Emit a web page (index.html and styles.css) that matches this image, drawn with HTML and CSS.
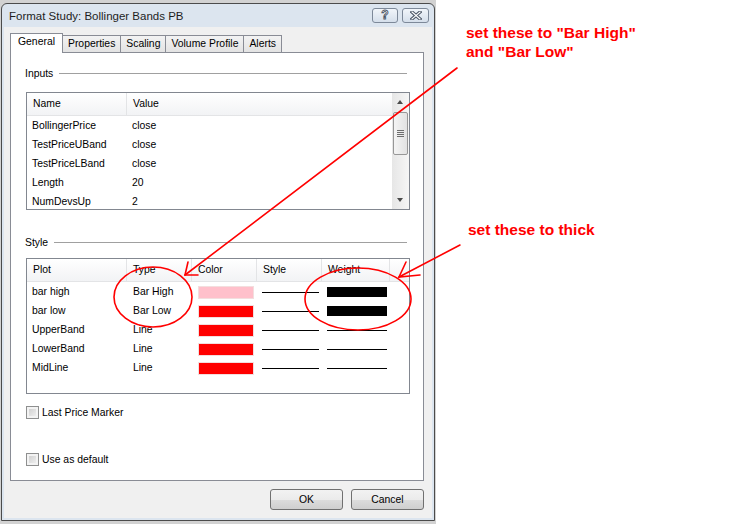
FILE: index.html
```html
<!DOCTYPE html>
<html lang="en">
<head>
<meta charset="UTF-8" />
<title>Format Study: Bollinger Bands PB</title>
<link rel="stylesheet" href="styles.css">
</head>
<body>

<div class="page">
  <div class="desk">
  <div class="window">
    <div class="titlebar">
      <span class="title">Format Study: Bollinger Bands PB</span>
      <div class="caption-btns">
        <span class="cbtn help">?</span>
        <span class="cbtn close">
          <svg width="12" height="9" viewBox="0 0 12 9">
            <path d="M2 1 L10 8 M10 1 L2 8" stroke="#4b5666" stroke-width="3.2" stroke-linecap="square" fill="none"/>
            <path d="M2 1 L10 8 M10 1 L2 8" stroke="#fff" stroke-width="1.2" stroke-linecap="square" fill="none"/>
          </svg>
        </span>
      </div>
    </div>

    <div class="client">
      <div class="tabs">
        <div class="tab active">General</div>
        <div class="tab">Properties</div>
        <div class="tab">Scaling</div>
        <div class="tab">Volume Profile</div>
        <div class="tab">Alerts</div>
      </div>

      <div class="panel">
        <div class="group">Inputs</div>
        <div class="listbox inputs">
          <div class="list-body">
            <div class="head cols-inputs"><span>Name</span><span>Value</span></div>
            <div class="row cols-inputs"><span>BollingerPrice</span><span>close</span></div>
            <div class="row cols-inputs"><span>TestPriceUBand</span><span>close</span></div>
            <div class="row cols-inputs"><span>TestPriceLBand</span><span>close</span></div>
            <div class="row cols-inputs"><span>Length</span><span>20</span></div>
            <div class="row cols-inputs"><span>NumDevsUp</span><span>2</span></div>
          </div>
          <div class="scroll">
            <div class="arrow up"></div>
            <div class="thumb"><i></i><i></i><i></i><i></i></div>
            <div class="track"></div>
            <div class="arrow down"></div>
          </div>
        </div>

        <div class="group style-group">Style</div>
        <div class="listbox style-list">
          <div class="list-body">
            <div class="head cols-style"><span>Plot</span><span>Type</span><span>Color</span><span>Style</span><span>Weight</span><span></span></div>
            <div class="row cols-style">
              <span>bar high</span><span>Bar High</span>
              <span><b class="swatch pink"></b></span>
              <span><b class="line"></b></span>
              <span><b class="weight thick"></b></span>
            </div>
            <div class="row cols-style">
              <span>bar low</span><span>Bar Low</span>
              <span><b class="swatch red"></b></span>
              <span><b class="line"></b></span>
              <span><b class="weight thick"></b></span>
            </div>
            <div class="row cols-style">
              <span>UpperBand</span><span>Line</span>
              <span><b class="swatch red"></b></span>
              <span><b class="line"></b></span>
              <span><b class="weight thin"></b></span>
            </div>
            <div class="row cols-style">
              <span>LowerBand</span><span>Line</span>
              <span><b class="swatch red"></b></span>
              <span><b class="line"></b></span>
              <span><b class="weight thin"></b></span>
            </div>
            <div class="row cols-style">
              <span>MidLine</span><span>Line</span>
              <span><b class="swatch red"></b></span>
              <span><b class="line"></b></span>
              <span><b class="weight thin"></b></span>
            </div>
          </div>
        </div>

        <label class="check first"><span class="box"></span>Last Price Marker</label>
        <label class="check second"><span class="box"></span>Use as default</label>
      </div>

      <div class="actions">
        <button>OK</button>
        <button>Cancel</button>
      </div>
    </div>
  </div>
  </div>

  <div class="notes">
    <p class="note">set these to "Bar High"<br>and "Bar Low"</p>
    <p class="note thick-note">set these to thick</p>
  </div>
</div>

<!-- red pen marks drawn over the screenshot -->
<svg class="marks" width="748" height="524" viewBox="0 0 748 524">
  <g stroke="#f00" stroke-width="1.6" fill="none" stroke-linecap="round">
    <line x1="457" y1="68" x2="185" y2="275"/>
    <polyline points="188,262 185,275 198,275"/>
    <ellipse cx="153" cy="297" rx="39" ry="30"/>
    <line x1="460" y1="245" x2="399" y2="277"/>
    <polyline points="406,262 399,277 420,275"/>
    <ellipse cx="358" cy="299" rx="53" ry="31"/>
  </g>
</svg>

</body>
</html>
```

FILE: styles.css
```css
body {
  margin: 0;
  width: 748px;
  height: 524px;
  overflow: hidden;
  position: relative;
  background: #fff;
  font-family: "Liberation Sans", Arial, sans-serif;
  font-size: 10.4px;
  color: #000;
}
.page {
  display: flex;
  align-items: flex-start;
}
.desk {
  padding: 3px 1px 3px 1px;
  background: #d2d2d2;
}
.window {
  width: 434px;
  height: 518px;
  box-sizing: border-box;
  border: 1px solid #4b4b4b;
  border-radius: 6px 6px 0 0;
  background: #dce5ef;
  padding: 0 2px 2px;
  display: flex;
  flex-direction: column;
}
.titlebar {
  height: 23px;
  display: flex;
  align-items: center;
  padding: 0 3px 0 5px;
}
.title {
  flex: 1;
  font-size: 11.5px;
  color: #1e1e1e;
}
.caption-btns {
  display: flex;
  gap: 4px;
}
.cbtn {
  width: 26px;
  height: 15px;
  box-sizing: border-box;
  border: 1px solid #7d8999;
  border-radius: 3px;
  background: linear-gradient(#f1f5fa, #d5dfeb);
  display: flex;
  align-items: center;
  justify-content: center;
}
.cbtn.close {
  width: 27px;
}
.help {
  font-weight: bold;
  font-size: 12px;
  color: #fff;
  -webkit-text-stroke: 0.9px #4b5666;
  line-height: 13px;
}
.client {
  flex: 1;
  background: #f0f0f0;
  padding: 6px 8px 0 6px;
  display: flex;
  flex-direction: column;
}

/* tabs */
.tabs {
  display: flex;
  align-items: flex-end;
  height: 19px;
  position: relative;
  z-index: 1;
}
.tab {
  height: 17px;
  box-sizing: border-box;
  padding: 2px 5px 0;
  margin-right: -1px;
  border: 1px solid #898c95;
  border-bottom: none;
  background: linear-gradient(#f3f3f3, #e3e3e3);
}
.tab.active {
  height: 20px;
  margin-bottom: -1px;
  padding: 2px 7px 0;
  background: #fff;
}
.panel {
  height: 429px;
  box-sizing: border-box;
  border: 1px solid #898c95;
  background: #fff;
  padding: 13px 13px 0 15px;
}
.group {
  display: flex;
  align-items: center;
  gap: 6px;
  height: 14px;
  margin-left: -1px;
}
.group::after {
  content: "";
  flex: 1;
  border-top: 1px solid #a0a0a0;
  margin-right: 3px;
}
.style-group {
  margin-top: 25px;
}

/* list views */
.listbox {
  display: flex;
  border: 1px solid #828790;
  background: #fff;
  overflow: hidden;
  box-sizing: border-box;
}
.inputs {
  height: 118px;
  margin-top: 12px;
}
.style-list {
  height: 136px;
  margin-top: 9px;
}
.list-body {
  flex: 1;
  min-width: 0;
}
.head {
  display: grid;
  height: 23px;
  box-sizing: border-box;
  border-bottom: 1px solid #e3e4e6;
  background: linear-gradient(#fff, #f2f3f5);
}
.head span {
  border-right: 1px solid #e3e4e6;
  padding-left: 6px;
  line-height: 22px;
}
.head span:last-child {
  border-right: none;
}
.row {
  display: grid;
  height: 19px;
  line-height: 19px;
}
.row span {
  padding-left: 5px;
  white-space: nowrap;
}
.cols-inputs {
  grid-template-columns: 100px 1fr;
}
.cols-style {
  grid-template-columns: 100px 65px 65px 65px 68px 1fr;
}
.row.cols-style span:nth-child(2) {
  padding-left: 6px;
}
.row.cols-style span:nth-child(n+3) {
  padding: 0;
}
.swatch {
  display: block;
  height: 13px;
  margin: 4px 3px 0 6px;
  box-sizing: border-box;
  border: 1px solid #f3dede;
}
.swatch.pink {
  background: #ffc0cb;
}
.swatch.red {
  background: #f00;
}
.line {
  display: block;
  margin: 10px 3px 0 5px;
  border-top: 1px solid #000;
}
.weight {
  display: block;
  margin: 0 3px 0 5px;
}
.weight.thick {
  height: 10px;
  margin-top: 5px;
  background: #000;
}
.weight.thin {
  margin-top: 10px;
  border-top: 1px solid #000;
}

/* scrollbar */
.scroll {
  width: 17px;
  display: flex;
  flex-direction: column;
  background: linear-gradient(90deg, #e6e6e6, #f6f6f6);
}
.arrow {
  height: 17px;
  position: relative;
}
.arrow::after {
  content: "";
  position: absolute;
  left: 5px;
  top: 7px;
  border-left: 3.5px solid transparent;
  border-right: 3.5px solid transparent;
}
.arrow.up::after {
  border-bottom: 4px solid #4a4a4a;
}
.arrow.down::after {
  border-top: 4px solid #4a4a4a;
  top: 6px;
}
.thumb {
  height: 43px;
  margin: 2px 1px 0;
  box-sizing: border-box;
  border: 1px solid #979797;
  border-radius: 2px;
  background: linear-gradient(90deg, #f4f4f4, #e2e2e2);
  display: flex;
  flex-direction: column;
  align-items: center;
  justify-content: center;
  gap: 1px;
}
.thumb i {
  width: 7px;
  height: 1px;
  background: #6d6d6d;
}
.track {
  flex: 1;
}

/* checkboxes */
.check {
  display: flex;
  align-items: center;
  gap: 3px;
  height: 14px;
}
.check.first {
  margin-top: 11px;
}
.check.second {
  margin-top: 33px;
}
.box {
  width: 13px;
  height: 13px;
  box-sizing: border-box;
  border: 1px solid #8e8f8f;
  background: linear-gradient(135deg, #c9c9c9, #f6f6f6);
  box-shadow: inset 0 0 0 2px #f3f3f3;
}

/* dialog buttons */
.actions {
  display: flex;
  justify-content: flex-end;
  gap: 8px;
  margin-top: 8px;
}
.actions button {
  width: 73px;
  height: 21px;
  border: 1px solid #707070;
  border-radius: 3px;
  background: linear-gradient(#f2f2f2 0%, #ebebeb 50%, #dddddd 50%, #cfcfcf 100%);
  font-family: inherit;
  font-size: 10.4px;
  color: #000;
}

/* red notes */
.notes {
  margin-left: 30px;
  padding-top: 23px;
  color: #f00;
  font-weight: bold;
  font-size: 15.5px;
  line-height: 19px;
}
.note {
  margin: 0;
}
.thick-note {
  margin-top: 159px;
  padding-left: 2px;
}
.marks {
  position: absolute;
  left: 0;
  top: 0;
  pointer-events: none;
}
```
